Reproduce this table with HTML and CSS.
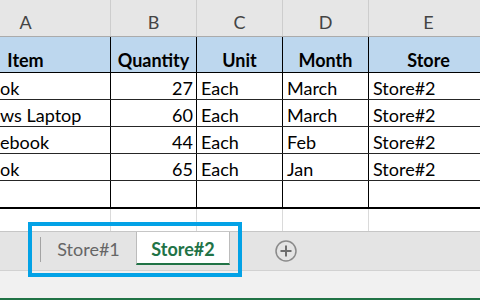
FILE: index.html
```html
<!DOCTYPE html>
<html lang="en">
<head>
    <meta charset="UTF-8">
    <title>Store#2</title>
    <link rel="stylesheet" href="styles.css">
</head>
<body>

    <!-- Planilha -->
    <div class="sheet">
        <div class="row letters">
            <div class="cell">A</div>
            <div class="cell">B</div>
            <div class="cell">C</div>
            <div class="cell">D</div>
            <div class="cell">E</div>
        </div>
        <div class="row head">
            <div class="cell">Item</div>
            <div class="cell">Quantity</div>
            <div class="cell">Unit</div>
            <div class="cell">Month</div>
            <div class="cell">Store</div>
        </div>
        <div class="row data">
            <div class="cell item">ok</div>
            <div class="cell num">27</div>
            <div class="cell">Each</div>
            <div class="cell">March</div>
            <div class="cell">Store#2</div>
        </div>
        <div class="row data">
            <div class="cell item">ws Laptop</div>
            <div class="cell num">60</div>
            <div class="cell">Each</div>
            <div class="cell">March</div>
            <div class="cell">Store#2</div>
        </div>
        <div class="row data">
            <div class="cell item">ebook</div>
            <div class="cell num">44</div>
            <div class="cell">Each</div>
            <div class="cell">Feb</div>
            <div class="cell">Store#2</div>
        </div>
        <div class="row data">
            <div class="cell item">ok</div>
            <div class="cell num">65</div>
            <div class="cell">Each</div>
            <div class="cell">Jan</div>
            <div class="cell">Store#2</div>
        </div>
        <div class="row data last">
            <div class="cell"></div>
            <div class="cell"></div>
            <div class="cell"></div>
            <div class="cell"></div>
            <div class="cell"></div>
        </div>
        <div class="row empty">
            <div class="cell"></div>
            <div class="cell"></div>
            <div class="cell"></div>
            <div class="cell"></div>
            <div class="cell"></div>
        </div>
    </div>

    <!-- Abas -->
    <div class="tabbar">
        <div class="tab-sep"></div>
        <div class="tab">Store#1</div>
        <div class="tab active">Store#2</div>
        <div class="add-sheet">
            <svg width="22" height="22" viewBox="0 0 22 22">
                <circle cx="11" cy="11" r="10" fill="none" stroke="#8a8a8a" stroke-width="1.5"/>
                <path d="M11 5.5v11M5.5 11h11" stroke="#6e6e6e" stroke-width="2"/>
            </svg>
        </div>
    </div>
    <div class="status"></div>

    <div class="callout"></div>

</body>
</html>
```

FILE: styles.css
```css
body {
    margin: 0;
    width: 480px;
    height: 300px;
    overflow: hidden;
    position: relative;
    font-family: Lato, "Open Sans", sans-serif;
    font-size: 18px;
    color: #000;
    background: #fff;
}

.sheet {
    height: 231px;
    overflow: hidden;
}

.row {
    display: grid;
    grid-template-columns: 170px 86px 86px 86px 120px;
    margin-left: -59px;
}

.cell {
    box-sizing: border-box;
    border-right: 1px solid #000;
    white-space: nowrap;
    overflow: hidden;
    line-height: 20px;
}

.letters {
    background: #e6e6e6;
    border-bottom: 1px solid #ababab;
}

.letters .cell {
    height: 36px;
    padding-top: 12px;
    text-align: center;
    color: #444;
    border-right-color: #cdcdcd;
}

.head {
    background: #bdd7ee;
    border-bottom: 1px solid #000;
}

.head .cell {
    height: 35px;
    padding-top: 13px;
    text-align: center;
    font-weight: 700;
}

.data {
    border-bottom: 1px solid #262626;
}

.data .cell {
    height: 26px;
    padding: 5px 3px 0 4px;
}

.data .item {
    padding-left: 59px;
}

.data .num {
    text-align: right;
}

.data.last {
    border-bottom: 2px solid #000;
}

.empty .cell {
    height: 22px;
    border-right-color: #dadada;
}

.tabbar {
    display: flex;
    height: 38px;
    background: #e4e4e4;
    border-top: 1px solid #c6c6c6;
    border-bottom: 1px solid #d2d2d2;
    padding-left: 40px;
}

.tab-sep {
    width: 1px;
    height: 25px;
    margin-top: 5px;
    background: #a3a3a3;
}

.tab {
    width: 95px;
    font-size: 18px;
    line-height: 20px;
    padding-top: 7px;
    text-align: center;
    color: #666;
    box-sizing: border-box;
}

.tab.active {
    width: 94px;
    height: 33px;
    background: #fff;
    border-left: 1px solid #bcbcbc;
    border-right: 1px solid #bcbcbc;
    border-bottom: 2px solid #217346;
    color: #217346;
    font-weight: 700;
}

.add-sheet {
    margin-left: 45px;
    align-self: center;
    display: flex;
}

.status {
    height: 27px;
    background: #f1f1f1;
    border-bottom: 2px solid #217346;
}

.callout {
    position: absolute;
    left: 28px;
    top: 222px;
    width: 214px;
    height: 55px;
    box-sizing: border-box;
    border: 4px solid #03a2e6;
}
```
